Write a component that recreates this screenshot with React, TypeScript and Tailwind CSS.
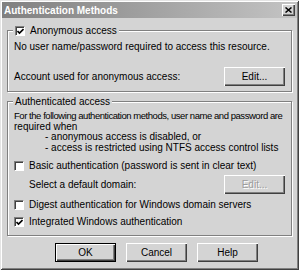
import React from "react";

function CheckBox({ checked }: { checked?: boolean }) {
  return (
    <span className="flex h-[10px] w-[10px] shrink-0 items-center justify-center border border-b-white border-l-[#808080] border-r-white border-t-[#808080] bg-white shadow-[inset_1px_1px_0_#404040]">
      {checked && (
        <svg width="7" height="7" viewBox="0 0 7 7" className="ml-[1px] mt-[1px]">
          <path d="M0.5 3 L2.5 5 L6.5 1" fill="none" stroke="#000" strokeWidth="1.6" />
        </svg>
      )}
    </span>
  );
}

function Button({
  label,
  disabled,
  isDefault,
  className = "",
}: {
  label: string;
  disabled?: boolean;
  isDefault?: boolean;
  className?: string;
}) {
  const frame = isDefault
    ? "border border-black shadow-[inset_1px_1px_0_#fff,inset_-1px_-1px_0_#404040,inset_-2px_-2px_0_#808080]"
    : "shadow-[inset_1px_1px_0_#fff,inset_-1px_-1px_0_#404040,inset_-2px_-2px_0_#808080]";
  return (
    <div
      className={`flex h-[19px] w-[61px] items-center justify-center bg-[#d4d4d4] text-[10px] ${frame} ${
        disabled ? "text-[#9c9c9c] [text-shadow:1px_1px_0_#fff]" : "text-black"
      } ${className}`}
    >
      {label}
    </div>
  );
}

function Group({
  legend,
  className = "",
  children,
}: {
  legend: React.ReactNode;
  className?: string;
  children: React.ReactNode;
}) {
  return (
    <div
      className={`relative border border-[#808080] shadow-[1px_1px_0_#fff,inset_1px_1px_0_#fff] ${className}`}
    >
      <div className="absolute left-[5px] top-[-6px] flex h-[12px] items-center bg-[#d4d4d4] px-[2px]">
        {legend}
      </div>
      {children}
    </div>
  );
}

export default function App() {
  return (
    <div
      className="h-[270px] w-[299px] overflow-hidden bg-[#d4d4d4] p-[2px] text-black shadow-[inset_1px_1px_0_#e4e4e4,inset_-1px_-1px_0_#404040,inset_2px_2px_0_#fff,inset_-2px_-2px_0_#808080]"
      style={{ fontFamily: '"Liberation Sans", Arial, sans-serif' }}
    >
      <div className="flex h-[16px] items-center justify-between bg-gradient-to-r from-[#808080] to-[#c4c4c4] pl-[2px] pr-[2px]">
        <span className="text-[10px] font-bold text-white">Authentication Methods</span>
        <span className="flex h-[12px] w-[13px] items-center justify-center bg-[#d4d4d4] shadow-[inset_1px_1px_0_#fff,inset_-1px_-1px_0_#404040,inset_-2px_-2px_0_#808080]">
          <svg width="7" height="6" viewBox="0 0 7 6">
            <path d="M0.5 0.5 L6.5 5.5 M6.5 0.5 L0.5 5.5" stroke="#000" strokeWidth="1.5" />
          </svg>
        </span>
      </div>

      <div className="whitespace-nowrap px-[5px] text-[10px] leading-[12px]">
        <Group
          className="mt-[12px] pb-[5px] pl-[6px] pr-[6px] pt-[10px]"
          legend={
            <div className="flex items-center gap-[5px]">
              <CheckBox checked />
              <span>Anonymous access</span>
            </div>
          }
        >
          <p>No user name/password required to access this resource.</p>
          <div className="mt-[14px] flex items-center justify-between">
            <span>Account used for anonymous access:</span>
            <Button label="Edit..." />
          </div>
        </Group>

        <Group
          className="mt-[9px] pb-[7px] pl-[6px] pr-[6px] pt-[9px]"
          legend={<span>Authenticated access</span>}
        >
          <div className="leading-[10.5px]">
            <p className="text-[9.5px] tracking-[-0.45px]">
              For the following authentication methods, user name and password are
            </p>
            <p>required when</p>
            <p className="pl-[31px]">- anonymous access is disabled, or</p>
            <p className="pl-[31px]">- access is restricted using NTFS access control lists</p>
          </div>
          <div className="mt-[7px] flex h-[12px] items-center gap-[5px]">
            <CheckBox />
            <span>Basic authentication (password is sent in clear text)</span>
          </div>
          <div className="mt-[3px] flex items-center justify-between pl-[15px]">
            <span>Select a default domain:</span>
            <Button label="Edit..." disabled />
          </div>
          <div className="mt-[5px] flex h-[12px] items-center gap-[5px]">
            <CheckBox />
            <span>Digest authentication for Windows domain servers</span>
          </div>
          <div className="mt-[5px] flex h-[12px] items-center gap-[5px]">
            <CheckBox checked />
            <span>Integrated Windows authentication</span>
          </div>
        </Group>

        <div className="mt-[7px] flex gap-[10px] pl-[48px]">
          <Button label="OK" isDefault />
          <Button label="Cancel" />
          <Button label="Help" />
        </div>
      </div>
    </div>
  );
}
